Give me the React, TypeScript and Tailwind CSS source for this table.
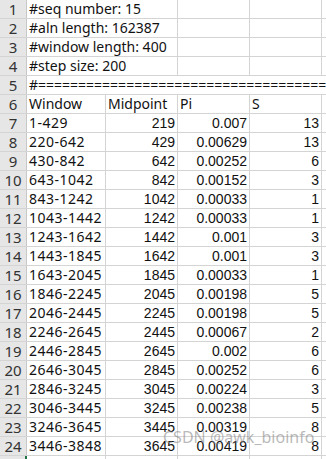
const rows: [string, string, string, string][] = [
  ['1-429', '219', '0.007', '13'],
  ['220-642', '429', '0.00629', '13'],
  ['430-842', '642', '0.00252', '6'],
  ['643-1042', '842', '0.00152', '3'],
  ['843-1242', '1042', '0.00033', '1'],
  ['1043-1442', '1242', '0.00033', '1'],
  ['1243-1642', '1442', '0.001', '3'],
  ['1443-1845', '1642', '0.001', '3'],
  ['1643-2045', '1845', '0.00033', '1'],
  ['1846-2245', '2045', '0.00198', '5'],
  ['2046-2445', '2245', '0.00198', '5'],
  ['2246-2645', '2445', '0.00067', '2'],
  ['2446-2845', '2645', '0.002', '6'],
  ['2646-3045', '2845', '0.00252', '6'],
  ['2846-3245', '3045', '0.00224', '3'],
  ['3046-3445', '3245', '0.00238', '5'],
  ['3246-3645', '3445', '0.00319', '8'],
  ['3446-3848', '3645', '0.00419', '8'],
];

const notes = ['#seq number: 15', '#aln length: 162387', '#window length: 400', '#step size: 200'];

const RowHead = ({ n }: { n: number }) => (
  <div className="w-[27px] shrink-0 h-full bg-[#e6e6e6] border-r border-[#c8c8c8] flex items-center justify-center text-[15px] text-[#333] font-['Noto_Sans',sans-serif]">
    {n}
  </div>
);

const Row = ({ children }: { children: React.ReactNode }) => (
  <div className="flex h-[19px] border-b border-[#d4d4d4] leading-[18px]">{children}</div>
);

const text = "font-['Noto_Sans',sans-serif] text-[14px] text-[#111]";
const num = "font-['Liberation_Sans',sans-serif] text-[14px] text-[#111] text-right pr-[2px]";

export default function App() {
  return (
    <div className="relative w-[326px] h-[459px] overflow-hidden bg-white">
      {notes.map((t, i) => (
        <Row key={t}>
          <RowHead n={i + 1} />
          <div className={`w-[151px] shrink-0 border-r border-[#d4d4d4] pl-[2px] whitespace-nowrap ${text}`}>{t}</div>
          <div className="w-[72px] shrink-0 border-r border-[#d4d4d4]" />
          <div className="w-[72px] shrink-0 border-r border-[#d4d4d4]" />
          <div className="flex-1" />
        </Row>
      ))}
      <Row>
        <RowHead n={5} />
        <div className={`flex-1 pl-[2px] whitespace-nowrap overflow-hidden ${text}`}>
          #===================================================
        </div>
      </Row>
      <Row>
        <RowHead n={6} />
        <div className={`w-[79px] shrink-0 border-r border-[#d4d4d4] pl-[2px] ${text}`}>Window</div>
        <div className={`w-[72px] shrink-0 border-r border-[#d4d4d4] pl-[2px] ${text}`}>Midpoint</div>
        <div className={`w-[72px] shrink-0 border-r border-[#d4d4d4] pl-[2px] ${text}`}>Pi</div>
        <div className={`w-[72px] shrink-0 border-r border-[#d4d4d4] pl-[2px] ${text}`}>S</div>
        <div className="flex-1" />
      </Row>
      {rows.map((r, i) => (
        <Row key={r[0]}>
          <RowHead n={i + 7} />
          <div className={`w-[79px] shrink-0 border-r border-[#d4d4d4] pl-[2px] whitespace-nowrap tracking-[0.5px] ${text}`}>{r[0]}</div>
          <div className={`w-[72px] shrink-0 border-r border-[#d4d4d4] ${num}`}>{r[1]}</div>
          <div className={`w-[72px] shrink-0 border-r border-[#d4d4d4] ${num}`}>{r[2]}</div>
          <div className={`w-[72px] shrink-0 border-r border-[#d4d4d4] ${num}`}>{r[3]}</div>
          <div className="flex-1" />
        </Row>
      ))}
      <div className="flex h-[19px]">
        <div className="w-[27px] shrink-0 h-full bg-[#e6e6e6] border-r-2 border-[#217346]" />
        <div className="w-[79px] shrink-0 border-r border-[#d4d4d4]" />
        <div className="w-[72px] shrink-0 border-r border-[#d4d4d4]" />
        <div className="w-[72px] shrink-0 border-r border-[#d4d4d4]" />
        <div className="w-[72px] shrink-0 border-r border-[#d4d4d4]" />
      </div>
      <div className="absolute left-[163px] top-[428px] leading-[18px] text-[16px] text-[#8a8a8a]/60 font-['Noto_Sans',sans-serif] whitespace-nowrap">
        CSDN @awk_bioinfo
      </div>
    </div>
  );
}
